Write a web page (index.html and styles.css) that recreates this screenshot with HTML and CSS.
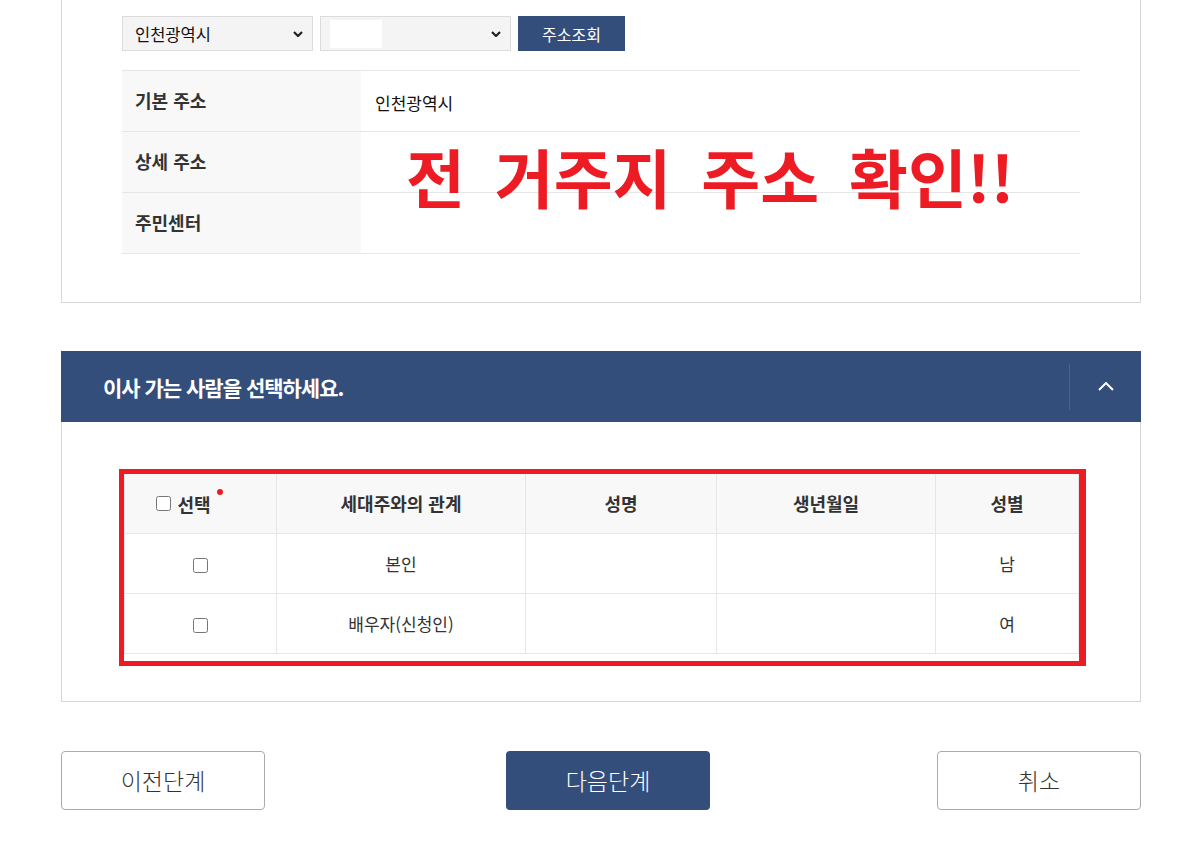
FILE: index.html
```html
<!DOCTYPE html>
<html lang="ko">
  <head>
    <meta charset="UTF-8" />
    <meta name="viewport" content="width=device-width, initial-scale=1.0" />
    <title>전입신고 - 이사 가는 사람 선택</title>
    <link rel="stylesheet" href="styles.css">
  </head>
  <body>
    <div class="page">
      <section class="panel panel-addr">
        <div class="addr-search">
          <div class="select">
            <span class="select-text">인천광역시</span>
            <svg class="select-arrow" viewBox="0 0 10 6" width="10" height="6"><path d="M1 1l4 4 4-4" fill="none" stroke="currentColor" stroke-width="2.2"/></svg>
          </div>
          <div class="select">
            <span class="select-mask"></span>
            <svg class="select-arrow" viewBox="0 0 10 6" width="10" height="6"><path d="M1 1l4 4 4-4" fill="none" stroke="currentColor" stroke-width="2.2"/></svg>
          </div>
          <button class="btn-search">주소조회</button>
        </div>

        <table class="addr-table">
          <tr>
            <th>기본 주소</th>
            <td>인천광역시</td>
          </tr>
          <tr>
            <th>상세 주소</th>
            <td></td>
          </tr>
          <tr>
            <th>주민센터</th>
            <td></td>
          </tr>
        </table>

        <!-- annotation drawn over the table -->
        <p class="note">전 거주지 주소 확인!!</p>
      </section>

      <section class="fold">
        <div class="fold-head">
          <h2>이사 가는 사람을 선택하세요.</h2>
          <button class="fold-toggle" aria-label="접기">
            <svg viewBox="0 0 16 9" width="16" height="9"><path d="M1 8l7-7 7 7" fill="none" stroke="currentColor" stroke-width="2"/></svg>
          </button>
        </div>

        <div class="fold-body">
          <div class="mark-box">
            <table class="member-table">
              <colgroup>
                <col style="width: 152px" />
                <col style="width: 249px" />
                <col style="width: 191px" />
                <col style="width: 219px" />
                <col />
              </colgroup>
              <thead>
                <tr>
                  <th>
                    <label class="check-all"><input type="checkbox" /> 선택<span class="req"></span></label>
                  </th>
                  <th>세대주와의 관계</th>
                  <th>성명</th>
                  <th>생년월일</th>
                  <th>성별</th>
                </tr>
              </thead>
              <tbody>
                <tr>
                  <td><input type="checkbox" /></td>
                  <td>본인</td>
                  <td></td>
                  <td></td>
                  <td>남</td>
                </tr>
                <tr>
                  <td><input type="checkbox" /></td>
                  <td>배우자(신청인)</td>
                  <td></td>
                  <td></td>
                  <td>여</td>
                </tr>
              </tbody>
            </table>
          </div>
        </div>
      </section>

      <div class="actions">
        <button class="btn btn-line">이전단계</button>
        <button class="btn btn-primary">다음단계</button>
        <button class="btn btn-line btn-cancel">취소</button>
      </div>
    </div>
  </body>
</html>
```

FILE: styles.css
```css
:root {
  --navy: #344e7b;
  --line: #e6e6e6;
  --panel-line: #d6d6d6;
  --label-bg: #f8f8f8;
  --text: #333;
  --mark: #ed1c24;
}

* {
  box-sizing: border-box;
  margin: 0;
  padding: 0;
}

body {
  font-family: "Noto Sans CJK KR", "Noto Sans", sans-serif;
  color: var(--text);
  background: #fff;
}

.page {
  width: 1080px;
  margin-left: 61px;
}

/* address panel */
.panel {
  border: 1px solid var(--panel-line);
  border-top: 0;
}

.panel-addr {
  position: relative;
  padding: 16px 60px 48px;
}

.addr-search {
  display: flex;
  gap: 7px;
  height: 35px;
}

.select {
  position: relative;
  display: flex;
  align-items: center;
  width: 191px;
  padding: 0 9px 0 12px;
  background: #f4f4f4;
  border: 1px solid #dcdcdc;
  font-size: 16.5px;
  color: #111;
}

.select-arrow {
  color: #222;
  margin-left: auto;
}

.select-mask {
  position: absolute;
  left: 9px;
  top: 3px;
  width: 52px;
  height: 28px;
  background: #fff;
}

.btn-search {
  width: 107px;
  border: 0;
  background: var(--navy);
  color: #fff;
  font-family: inherit;
  font-size: 16px;
}

.addr-table {
  width: 100%;
  margin-top: 19px;
  border-collapse: collapse;
  border-top: 1px solid var(--line);
}

.addr-table th,
.addr-table td {
  height: 61px;
  border-bottom: 1px solid var(--line);
  text-align: left;
}

.addr-table th {
  width: 239px;
  padding: 0 0 3px 13px;
  background: var(--label-bg);
  font-size: 18px;
  font-weight: 700;
  color: #333;
}

.addr-table td {
  padding: 2px 0 0 14px;
  font-size: 17px;
  color: #111;
}

.note {
  position: absolute;
  left: 344px;
  top: 143px;
  font-size: 64px;
  font-weight: 700;
  line-height: 1;
  word-spacing: 12px;
  color: var(--mark);
  white-space: nowrap;
}

/* fold section */
.fold {
  margin-top: 48px;
}

.fold-head {
  display: flex;
  align-items: center;
  height: 71px;
  background: var(--navy);
}

.fold-head h2 {
  flex: 1;
  padding-left: 42px;
  font-size: 21px;
  font-weight: 700;
  letter-spacing: -1px;
  color: #fff;
}

.fold-toggle {
  display: flex;
  align-items: center;
  justify-content: center;
  width: 72px;
  height: 46px;
  border: 0;
  border-left: 1px solid #4b6390;
  background: transparent;
  color: #fff;
}

.fold-body {
  border: 1px solid var(--panel-line);
  border-top: 0;
  padding: 47px 54px 35px 57px;
}

.mark-box {
  border: 5px solid var(--mark);
  border-right-width: 7px;
  padding-bottom: 7px;
}

.member-table {
  width: 100%;
  border-collapse: collapse;
  border: 1px solid var(--line);
  border-top: 0;
  table-layout: fixed;
}

.member-table th,
.member-table td {
  border-left: 1px solid var(--line);
  border-bottom: 1px solid var(--line);
  text-align: center;
}

.member-table th:first-child,
.member-table td:first-child {
  border-left: 0;
}

.member-table th {
  height: 59px;
  background: var(--label-bg);
  font-size: 18px;
  font-weight: 700;
  color: #333;
}

.member-table td {
  height: 60px;
  font-size: 17px;
  color: #333;
}

.member-table input[type="checkbox"] {
  width: 15px;
  height: 15px;
  vertical-align: middle;
  margin: 0;
}

.check-all {
  position: relative;
  display: inline-flex;
  align-items: center;
  gap: 6px;
  margin-right: 34px;
}

.req {
  position: absolute;
  right: -12px;
  top: -2px;
  width: 6px;
  height: 6px;
  border-radius: 50%;
  background: var(--mark);
}

/* bottom buttons */
.actions {
  display: flex;
  margin-top: 49px;
}

.btn {
  width: 204px;
  height: 59px;
  border-radius: 4px;
  font-family: inherit;
  font-size: 23px;
  font-weight: 300;
  cursor: pointer;
}

.btn-line {
  border: 1px solid #ababab;
  background: #fff;
  color: #333;
}

.btn-primary {
  margin-left: 241px;
  border: 0;
  background: var(--navy);
  color: #fff;
}

.btn-cancel {
  margin-left: auto;
}
```
